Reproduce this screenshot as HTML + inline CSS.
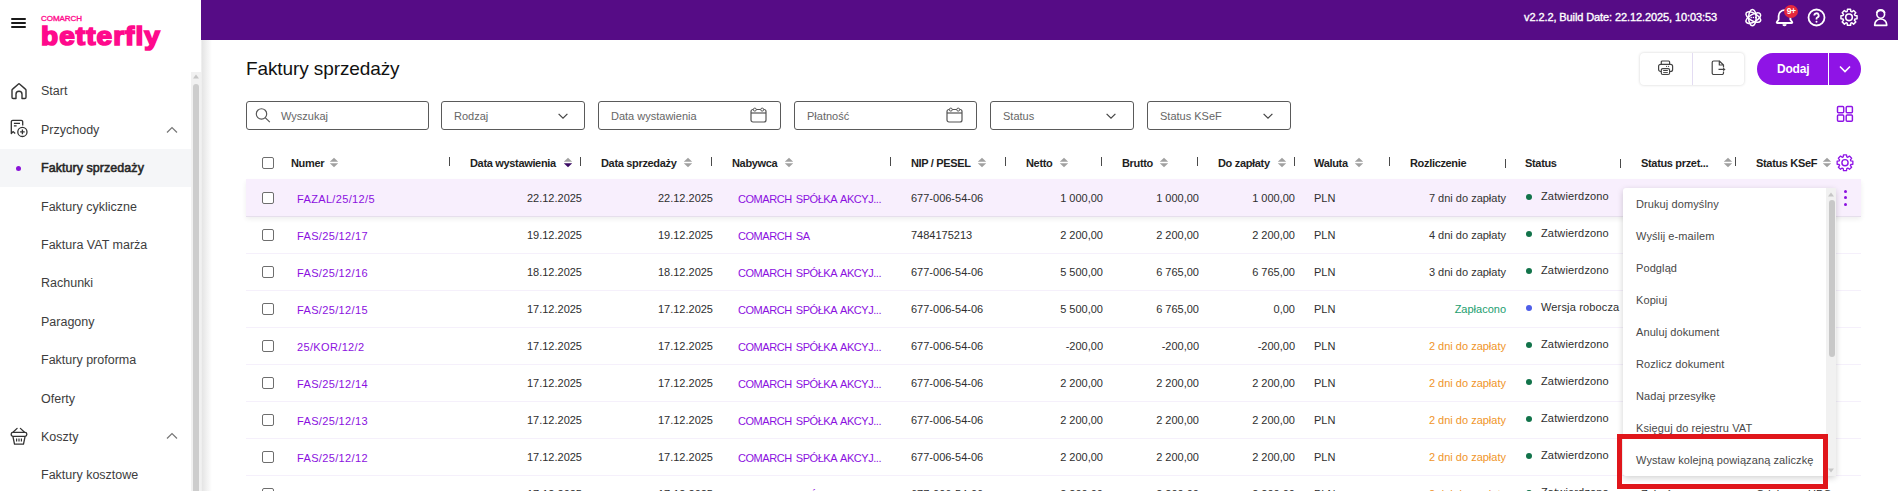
<!DOCTYPE html>
<html><head><meta charset="utf-8"><style>
html,body{margin:0;padding:0}
body{width:1898px;height:491px;overflow:hidden;position:relative;background:#fff;font-family:"Liberation Sans", sans-serif}
.t{position:absolute;white-space:nowrap}
svg{overflow:visible}
</style></head><body>
<div style="position:absolute;left:11px;top:18px;width:15px;height:2px;background:#1a1a1a;border-radius:1px"></div>
<div style="position:absolute;left:11px;top:22px;width:15px;height:2px;background:#1a1a1a;border-radius:1px"></div>
<div style="position:absolute;left:11px;top:26px;width:15px;height:2px;background:#1a1a1a;border-radius:1px"></div>
<div class="t" style="left:41px;top:14px;font-size:8px;line-height:9px;font-weight:400;color:#ff0a8c;letter-spacing:-0.05px;-webkit-text-stroke:0.35px #ff0a8c;">COMARCH</div>
<div class="t" style="left:41px;top:21px;font-size:26px;line-height:30px;font-weight:700;color:#ff0a8c;letter-spacing:1.0px;-webkit-text-stroke:1.7px #ff0a8c;transform:scaleX(1.075);transform-origin:0 0;">betterfly</div>
<div style="position:absolute;left:191px;top:72px;width:10px;height:419px;background:#f1f1f1"></div>
<svg style="position:absolute;left:192px;top:73px;" width="8" height="7" viewBox="0 0 8 7"><path d="M4 1.5 L7 5.5 L1 5.5 Z" fill="#c6c6c6"/></svg>
<div style="position:absolute;left:193px;top:84px;width:6px;height:420px;background:#cdcdcd;border-radius:3px"></div>
<svg style="position:absolute;left:10px;top:82px;" width="18" height="18" viewBox="0 0 18 18"><path d="M3.2 16.5 a1.2 1.2 0 0 1 -1.2 -1.2 V8.3 Q2 7.6 2.6 7.1 L8.2 2.2 Q9 1.5 9.8 2.2 L15.4 7.1 Q16 7.6 16 8.3 V15.3 a1.2 1.2 0 0 1 -1.2 1.2 H12 V12.3 a3 3 0 0 0 -6 0 V16.5 Z" fill="none" stroke="#333" stroke-width="1.4" stroke-linejoin="round"/></svg>
<div class="t" style="left:41px;top:84px;font-size:12.5px;line-height:14px;font-weight:400;color:#3d3d3d;">Start</div>
<svg style="position:absolute;left:10px;top:120px;" width="19" height="18" viewBox="0 0 19 18"><path d="M12.7 5.6 V1.8 a1.5 1.5 0 0 0 -1.5 -1.5 H2.8 a1.5 1.5 0 0 0 -1.5 1.5 V13.5 L3 11.6 L5.2 13.5" fill="none" stroke="#333" stroke-width="1.3" stroke-linejoin="round"/><path d="M3.9 3.4 H10 M3.9 5.8 H6.6" stroke="#333" stroke-width="1.2"/><circle cx="12.4" cy="11.9" r="4.6" fill="none" stroke="#333" stroke-width="1.3"/><path d="M12.4 9.6 V14.2 M10.1 11.9 H14.7" stroke="#333" stroke-width="1.3"/></svg>
<div class="t" style="left:41px;top:123px;font-size:12.5px;line-height:14px;font-weight:400;color:#3d3d3d;">Przychody</div>
<svg style="position:absolute;left:166px;top:125.5px;" width="12" height="8" viewBox="0 0 12 8"><path d="M1 6.5 L6 1.5 L11 6.5" fill="none" stroke="#777" stroke-width="1.2"/></svg>
<div style="position:absolute;left:0px;top:149px;width:191px;height:38px;background:#f5f6f8"></div>
<div style="position:absolute;left:16px;top:166px;width:5px;height:5px;background:#8a14d8;border-radius:50%"></div>
<div class="t" style="left:41px;top:161px;font-size:12.5px;line-height:14px;font-weight:400;color:#262626;letter-spacing:0.05px;-webkit-text-stroke:0.55px #262626;">Faktury sprzedaży</div>
<div class="t" style="left:41px;top:200px;font-size:12.5px;line-height:14px;font-weight:400;color:#3d3d3d;">Faktury cykliczne</div>
<div class="t" style="left:41px;top:238px;font-size:12.5px;line-height:14px;font-weight:400;color:#3d3d3d;">Faktura VAT marża</div>
<div class="t" style="left:41px;top:276px;font-size:12.5px;line-height:14px;font-weight:400;color:#3d3d3d;">Rachunki</div>
<div class="t" style="left:41px;top:315px;font-size:12.5px;line-height:14px;font-weight:400;color:#3d3d3d;">Paragony</div>
<div class="t" style="left:41px;top:353px;font-size:12.5px;line-height:14px;font-weight:400;color:#3d3d3d;">Faktury proforma</div>
<div class="t" style="left:41px;top:392px;font-size:12.5px;line-height:14px;font-weight:400;color:#3d3d3d;">Oferty</div>
<svg style="position:absolute;left:10px;top:428px;" width="18" height="18" viewBox="0 0 18 18"><path d="M7.1 0.4 L3 4.3 M10.4 0.4 L14.5 4.3" stroke="#333" stroke-width="1.3" stroke-linecap="round"/><rect x="1.2" y="4.3" width="15.6" height="4" rx="1.8" fill="none" stroke="#333" stroke-width="1.3"/><path d="M2.9 8.3 L4.5 16.2 H13.5 L15.1 8.3" fill="none" stroke="#333" stroke-width="1.3" stroke-linejoin="round"/><path d="M6.6 10.4 V13.6 M9 10.4 V13.6 M11.4 10.4 V13.6" stroke="#333" stroke-width="1.2"/></svg>
<div class="t" style="left:41px;top:430px;font-size:12.5px;line-height:14px;font-weight:400;color:#3d3d3d;">Koszty</div>
<svg style="position:absolute;left:166px;top:432px;" width="12" height="8" viewBox="0 0 12 8"><path d="M1 6.5 L6 1.5 L11 6.5" fill="none" stroke="#777" stroke-width="1.2"/></svg>
<div class="t" style="left:41px;top:468px;font-size:12.5px;line-height:14px;font-weight:400;color:#3d3d3d;">Faktury kosztowe</div>
<div style="position:absolute;left:201px;top:0px;width:1697px;height:40px;background:#560c86"></div>
<div style="position:absolute;left:201px;top:40px;width:11px;height:451px;background:linear-gradient(to right,#f3f3f3 0px,#e6e6e6 1.5px,#ffffff 11px)"></div>
<div class="t" style="right:181px;top:11px;font-size:11px;line-height:12px;font-weight:400;color:#fff;letter-spacing:-0.1px;-webkit-text-stroke:0.35px #fff;">v2.2.2, Build Date: 22.12.2025, 10:03:53</div>
<svg style="position:absolute;left:1744px;top:9px;" width="18" height="17" viewBox="0 0 18 17"><ellipse cx="8.40" cy="8.60" rx="8.2" ry="3.8" transform="rotate(90 8.40 8.60)" stroke="#fff" fill="none" stroke-width="1.5"/><ellipse cx="9.30" cy="8.08" rx="8.2" ry="3.8" transform="rotate(30 9.30 8.08)" stroke="#fff" fill="none" stroke-width="1.5"/><ellipse cx="9.30" cy="9.12" rx="8.2" ry="3.8" transform="rotate(-30 9.30 9.12)" stroke="#fff" fill="none" stroke-width="1.5"/><circle cx="7.2" cy="8.6" r="0.75" fill="#fff"/><circle cx="9.4" cy="8.6" r="0.75" fill="#fff"/><circle cx="11.6" cy="8.6" r="0.75" fill="#fff"/></svg>
<svg style="position:absolute;left:1775px;top:8px;" width="20" height="20" viewBox="0 0 20 20"><path d="M2.6 15 Q1.2 15 2 13.7 L3.6 11.6 V8 A5.9 5.9 0 0 1 15.4 8 V11.6 L17 13.7 Q17.8 15 16.4 15 Z" stroke="#fff" fill="none" stroke-width="1.8" stroke-linejoin="round"/><path d="M8 16.8 Q9.5 18.6 11 16.8 Z" fill="#fff" stroke="#fff" stroke-width="1.2" stroke-linejoin="round"/></svg>
<div style="position:absolute;left:1784px;top:5px;width:14px;height:13px;background:#e5283c;border-radius:50%"></div>
<div class="t" style="left:1791px;top:6px;font-size:8.5px;line-height:10px;font-weight:700;color:#fff;width:14px;margin-left:-7px;text-align:center;letter-spacing:-0.6px;">9+</div>
<svg style="position:absolute;left:1807px;top:8px;" width="19" height="19" viewBox="0 0 19 19"><circle cx="9.5" cy="9.5" r="8" stroke="#fff" fill="none" stroke-width="1.8"/><path d="M7.3 7.5 a2.2 2.2 0 1 1 3 2 q-0.8 0.4 -0.8 1.3 v0.7" stroke="#fff" fill="none" stroke-width="1.8"/><circle cx="9.5" cy="13.8" r="1" fill="#fff"/></svg>
<svg style="position:absolute;left:1840px;top:8px;" width="18" height="18" viewBox="0 0 18 18"><path d="M7.19 3.37 L7.44 1.25 L10.56 1.25 L10.81 3.37 L11.91 3.83 L13.59 2.50 L15.80 4.71 L14.47 6.39 L14.93 7.49 L17.05 7.74 L17.05 10.86 L14.93 11.11 L14.47 12.21 L15.80 13.89 L13.59 16.10 L11.91 14.77 L10.81 15.23 L10.56 17.35 L7.44 17.35 L7.19 15.23 L6.09 14.77 L4.41 16.10 L2.20 13.89 L3.53 12.21 L3.07 11.11 L0.95 10.86 L0.95 7.74 L3.07 7.49 L3.53 6.39 L2.20 4.71 L4.41 2.50 L6.09 3.83 Z" stroke="#fff" fill="none" stroke-width="1.5" stroke-linejoin="round"/><circle cx="9" cy="9.3" r="3.3" stroke="#fff" fill="none" stroke-width="1.6"/></svg>
<svg style="position:absolute;left:1873px;top:8px;" width="16" height="19" viewBox="0 0 16 19"><circle cx="7.7" cy="6.3" r="3.9" stroke="#fff" fill="none" stroke-width="1.6"/><path d="M3.6 5.2 a4.2 4.2 0 0 1 8.2 0" stroke="#fff" fill="none" stroke-width="1.6"/><path d="M1.7 17.3 V16.8 a6 5.8 0 0 1 12 0 V17.3 Z" stroke="#fff" fill="none" stroke-width="1.7" stroke-linejoin="round"/></svg>
<div class="t" style="left:246px;top:58px;font-size:19px;line-height:21px;font-weight:400;color:#111;letter-spacing:-0.1px;">Faktury sprzedaży</div>
<div style="position:absolute;left:1640px;top:53px;width:104px;height:32px;background:#fff;border-radius:4px;box-shadow:0 0 3px rgba(0,0,0,0.18)"></div>
<div style="position:absolute;left:1692px;top:53px;width:1px;height:32px;background:#e3dcf2"></div>
<svg style="position:absolute;left:1656px;top:59px;" width="20" height="18" viewBox="0 0 20 18"><path d="M5.3 5.3 V3 a1 1 0 0 1 1 -1 H12.6 a1 1 0 0 1 1 1 V5.3" fill="none" stroke="#444" stroke-width="1.2"/><path d="M5.3 12.5 H4.6 a2 2 0 0 1 -2 -2 V7.3 a2 2 0 0 1 2 -2 H14.6 a2 2 0 0 1 2 2 V10.5 a2 2 0 0 1 -2 2 H13.6" fill="none" stroke="#444" stroke-width="1.2"/><rect x="5.3" y="9.6" width="8.3" height="5.9" rx="1.5" fill="none" stroke="#444" stroke-width="1.2"/><path d="M7.2 11.5 H11.8 M7.2 13.6 H11.8" stroke="#444" stroke-width="1"/><circle cx="10.6" cy="7.4" r="0.55" fill="#444"/><circle cx="12.6" cy="7.4" r="0.55" fill="#444"/></svg>
<svg style="position:absolute;left:1710px;top:59px;" width="18" height="18" viewBox="0 0 18 18"><path d="M9.3 2 H3.7 a1.5 1.5 0 0 0 -1.5 1.5 V14 a1.5 1.5 0 0 0 1.5 1.5 H12 a1.5 1.5 0 0 0 1.5 -1.5 V12.5 M13.5 8.5 V6 L9.3 2 V6 H13.5" fill="none" stroke="#444" stroke-width="1.2" stroke-linejoin="round"/><path d="M8.5 10.4 H14.6 M13.2 9.1 L14.7 10.4 L13.2 11.7" fill="none" stroke="#444" stroke-width="1.1"/></svg>
<div style="position:absolute;left:1757px;top:53px;width:104px;height:32px;background:#8f14e6;border-radius:16px"></div>
<div style="position:absolute;left:1828px;top:53px;width:1px;height:32px;background:#fff"></div>
<div class="t" style="left:1777px;top:62px;font-size:12px;line-height:14px;font-weight:700;color:#fff;letter-spacing:-0.2px;">Dodaj</div>
<svg style="position:absolute;left:1839px;top:65px;" width="12" height="9" viewBox="0 0 12 9"><path d="M1 1.5 L6 6.5 L11 1.5" fill="none" stroke="#fff" stroke-width="1.6"/></svg>
<div style="position:absolute;left:246px;top:101px;width:183px;height:29px;border:1px solid #5a5a5a;border-radius:3px;box-sizing:border-box;background:#fff"></div>
<div style="position:absolute;left:441px;top:101px;width:144px;height:29px;border:1px solid #5a5a5a;border-radius:3px;box-sizing:border-box;background:#fff"></div>
<div style="position:absolute;left:598px;top:101px;width:183px;height:29px;border:1px solid #5a5a5a;border-radius:3px;box-sizing:border-box;background:#fff"></div>
<div style="position:absolute;left:794px;top:101px;width:183px;height:29px;border:1px solid #5a5a5a;border-radius:3px;box-sizing:border-box;background:#fff"></div>
<div style="position:absolute;left:990px;top:101px;width:144px;height:29px;border:1px solid #5a5a5a;border-radius:3px;box-sizing:border-box;background:#fff"></div>
<div style="position:absolute;left:1147px;top:101px;width:144px;height:29px;border:1px solid #5a5a5a;border-radius:3px;box-sizing:border-box;background:#fff"></div>
<svg style="position:absolute;left:255px;top:107px;" width="17" height="17" viewBox="0 0 17 17"><circle cx="6.5" cy="6.9" r="5.2" fill="none" stroke="#555" stroke-width="1.15"/><path d="M10.2 10.6 L14.8 15.2" stroke="#555" stroke-width="1.15"/></svg>
<div class="t" style="left:281px;top:110px;font-size:11px;line-height:12px;font-weight:400;color:#666;">Wyszukaj</div>
<div class="t" style="left:454px;top:110px;font-size:11px;line-height:12px;font-weight:400;color:#666;">Rodzaj</div>
<div class="t" style="left:611px;top:110px;font-size:11px;line-height:12px;font-weight:400;color:#666;">Data wystawienia</div>
<div class="t" style="left:807px;top:110px;font-size:11px;line-height:12px;font-weight:400;color:#666;">Płatność</div>
<div class="t" style="left:1003px;top:110px;font-size:11px;line-height:12px;font-weight:400;color:#666;">Status</div>
<div class="t" style="left:1160px;top:110px;font-size:11px;line-height:12px;font-weight:400;color:#666;">Status KSeF</div>
<svg style="position:absolute;left:557px;top:112px;" width="12" height="8" viewBox="0 0 12 8"><path d="M1.6 1.8 L6 6.2 L10.4 1.8" fill="none" stroke="#444" stroke-width="1.2"/></svg>
<svg style="position:absolute;left:1105px;top:112px;" width="12" height="8" viewBox="0 0 12 8"><path d="M1.6 1.8 L6 6.2 L10.4 1.8" fill="none" stroke="#444" stroke-width="1.2"/></svg>
<svg style="position:absolute;left:1262px;top:112px;" width="12" height="8" viewBox="0 0 12 8"><path d="M1.6 1.8 L6 6.2 L10.4 1.8" fill="none" stroke="#444" stroke-width="1.2"/></svg>
<svg style="position:absolute;left:750px;top:107px;" width="17" height="16" viewBox="0 0 17 16"><rect x="1" y="2.5" width="15" height="12.5" rx="2" fill="none" stroke="#555" stroke-width="1.2"/><path d="M1 6 H16" stroke="#555" stroke-width="1.2"/><circle cx="4.8" cy="2.6" r="1.5" fill="#fff" stroke="#555" stroke-width="1"/><circle cx="12.2" cy="2.6" r="1.5" fill="#fff" stroke="#555" stroke-width="1"/></svg>
<svg style="position:absolute;left:946px;top:107px;" width="17" height="16" viewBox="0 0 17 16"><rect x="1" y="2.5" width="15" height="12.5" rx="2" fill="none" stroke="#555" stroke-width="1.2"/><path d="M1 6 H16" stroke="#555" stroke-width="1.2"/><circle cx="4.8" cy="2.6" r="1.5" fill="#fff" stroke="#555" stroke-width="1"/><circle cx="12.2" cy="2.6" r="1.5" fill="#fff" stroke="#555" stroke-width="1"/></svg>
<svg style="position:absolute;left:1836px;top:105px;" width="18" height="18" viewBox="0 0 18 18"><rect x="1.5" y="1.5" width="6.2" height="6.2" rx="1" fill="none" stroke="#8f14e6" stroke-width="1.45"/><rect x="10.2" y="1.5" width="6.2" height="6.2" rx="1" fill="none" stroke="#8f14e6" stroke-width="1.45"/><rect x="1.5" y="10.0" width="6.2" height="6.2" rx="1" fill="none" stroke="#8f14e6" stroke-width="1.45"/><rect x="10.2" y="10.0" width="6.2" height="6.2" rx="1" fill="none" stroke="#8f14e6" stroke-width="1.45"/></svg>
<div style="position:absolute;left:262px;top:157px;width:12px;height:12px;border:1.5px solid #6e6e6e;border-radius:2px;box-sizing:border-box;background:#fff"></div>
<div class="t" style="left:291px;top:157px;font-size:11px;line-height:12px;font-weight:700;color:#1f1f1f;letter-spacing:-0.33px;">Numer</div>
<svg style="position:absolute;left:329px;top:157px;" width="10" height="11" viewBox="0 0 10 11"><path d="M5 0.8 L9.2 4.7 H0.8 Z" fill="#a0a0a0"/><path d="M5 10.2 L9.2 6.3 H0.8 Z" fill="#a0a0a0"/></svg>
<div class="t" style="left:470px;top:157px;font-size:11px;line-height:12px;font-weight:700;color:#1f1f1f;letter-spacing:-0.33px;">Data wystawienia</div>
<svg style="position:absolute;left:563px;top:157px;" width="10" height="11" viewBox="0 0 10 11"><path d="M5 0.8 L9.2 4.7 H0.8 Z" fill="#a0a0a0"/><path d="M5 10.2 L9.2 6.3 H0.8 Z" fill="#3a0a63"/></svg>
<div class="t" style="left:601px;top:157px;font-size:11px;line-height:12px;font-weight:700;color:#1f1f1f;letter-spacing:-0.33px;">Data sprzedaży</div>
<svg style="position:absolute;left:683px;top:157px;" width="10" height="11" viewBox="0 0 10 11"><path d="M5 0.8 L9.2 4.7 H0.8 Z" fill="#a0a0a0"/><path d="M5 10.2 L9.2 6.3 H0.8 Z" fill="#a0a0a0"/></svg>
<div class="t" style="left:732px;top:157px;font-size:11px;line-height:12px;font-weight:700;color:#1f1f1f;letter-spacing:-0.33px;">Nabywca</div>
<svg style="position:absolute;left:784px;top:157px;" width="10" height="11" viewBox="0 0 10 11"><path d="M5 0.8 L9.2 4.7 H0.8 Z" fill="#a0a0a0"/><path d="M5 10.2 L9.2 6.3 H0.8 Z" fill="#a0a0a0"/></svg>
<div class="t" style="left:911px;top:157px;font-size:11px;line-height:12px;font-weight:700;color:#1f1f1f;letter-spacing:-0.33px;">NIP / PESEL</div>
<svg style="position:absolute;left:977px;top:157px;" width="10" height="11" viewBox="0 0 10 11"><path d="M5 0.8 L9.2 4.7 H0.8 Z" fill="#a0a0a0"/><path d="M5 10.2 L9.2 6.3 H0.8 Z" fill="#a0a0a0"/></svg>
<div class="t" style="left:1026px;top:157px;font-size:11px;line-height:12px;font-weight:700;color:#1f1f1f;letter-spacing:-0.33px;">Netto</div>
<svg style="position:absolute;left:1059px;top:157px;" width="10" height="11" viewBox="0 0 10 11"><path d="M5 0.8 L9.2 4.7 H0.8 Z" fill="#a0a0a0"/><path d="M5 10.2 L9.2 6.3 H0.8 Z" fill="#a0a0a0"/></svg>
<div class="t" style="left:1122px;top:157px;font-size:11px;line-height:12px;font-weight:700;color:#1f1f1f;letter-spacing:-0.33px;">Brutto</div>
<svg style="position:absolute;left:1159px;top:157px;" width="10" height="11" viewBox="0 0 10 11"><path d="M5 0.8 L9.2 4.7 H0.8 Z" fill="#a0a0a0"/><path d="M5 10.2 L9.2 6.3 H0.8 Z" fill="#a0a0a0"/></svg>
<div class="t" style="left:1218px;top:157px;font-size:11px;line-height:12px;font-weight:700;color:#1f1f1f;letter-spacing:-0.33px;">Do zapłaty</div>
<svg style="position:absolute;left:1277px;top:157px;" width="10" height="11" viewBox="0 0 10 11"><path d="M5 0.8 L9.2 4.7 H0.8 Z" fill="#a0a0a0"/><path d="M5 10.2 L9.2 6.3 H0.8 Z" fill="#a0a0a0"/></svg>
<div class="t" style="left:1314px;top:157px;font-size:11px;line-height:12px;font-weight:700;color:#1f1f1f;letter-spacing:-0.33px;">Waluta</div>
<svg style="position:absolute;left:1354px;top:157px;" width="10" height="11" viewBox="0 0 10 11"><path d="M5 0.8 L9.2 4.7 H0.8 Z" fill="#a0a0a0"/><path d="M5 10.2 L9.2 6.3 H0.8 Z" fill="#a0a0a0"/></svg>
<div class="t" style="left:1410px;top:157px;font-size:11px;line-height:12px;font-weight:700;color:#1f1f1f;letter-spacing:-0.33px;">Rozliczenie</div>
<div class="t" style="left:1525px;top:157px;font-size:11px;line-height:12px;font-weight:700;color:#1f1f1f;letter-spacing:-0.33px;">Status</div>
<div class="t" style="left:1641px;top:157px;font-size:11px;line-height:12px;font-weight:700;color:#1f1f1f;letter-spacing:-0.33px;">Status przet...</div>
<svg style="position:absolute;left:1723px;top:157px;" width="10" height="11" viewBox="0 0 10 11"><path d="M5 0.8 L9.2 4.7 H0.8 Z" fill="#a0a0a0"/><path d="M5 10.2 L9.2 6.3 H0.8 Z" fill="#a0a0a0"/></svg>
<div class="t" style="left:1756px;top:157px;font-size:11px;line-height:12px;font-weight:700;color:#1f1f1f;letter-spacing:-0.33px;">Status KSeF</div>
<svg style="position:absolute;left:1822px;top:157px;" width="10" height="11" viewBox="0 0 10 11"><path d="M5 0.8 L9.2 4.7 H0.8 Z" fill="#a0a0a0"/><path d="M5 10.2 L9.2 6.3 H0.8 Z" fill="#a0a0a0"/></svg>
<div style="position:absolute;left:449px;top:157px;width:1px;height:9px;background:#4a4a4a"></div>
<div style="position:absolute;left:580px;top:157px;width:1px;height:9px;background:#4a4a4a"></div>
<div style="position:absolute;left:711px;top:157px;width:1px;height:9px;background:#4a4a4a"></div>
<div style="position:absolute;left:890px;top:157px;width:1px;height:9px;background:#4a4a4a"></div>
<div style="position:absolute;left:1005px;top:157px;width:1px;height:9px;background:#4a4a4a"></div>
<div style="position:absolute;left:1101px;top:157px;width:1px;height:9px;background:#4a4a4a"></div>
<div style="position:absolute;left:1197px;top:157px;width:1px;height:9px;background:#4a4a4a"></div>
<div style="position:absolute;left:1294px;top:157px;width:1px;height:9px;background:#4a4a4a"></div>
<div style="position:absolute;left:1389px;top:157px;width:1px;height:9px;background:#4a4a4a"></div>
<div style="position:absolute;left:1735px;top:157px;width:1px;height:9px;background:#4a4a4a"></div>
<div style="position:absolute;left:1505px;top:159px;width:1px;height:9px;background:#4a4a4a"></div>
<div style="position:absolute;left:1620px;top:159px;width:1px;height:9px;background:#4a4a4a"></div>
<svg style="position:absolute;left:1836px;top:154px;" width="18" height="18" viewBox="0 0 18 18"><path d="M7.22 2.87 L7.47 0.85 L10.53 0.85 L10.78 2.87 L11.86 3.31 L13.47 2.07 L15.63 4.23 L14.39 5.84 L14.83 6.92 L16.85 7.17 L16.85 10.23 L14.83 10.48 L14.39 11.56 L15.63 13.17 L13.47 15.33 L11.86 14.09 L10.78 14.53 L10.53 16.55 L7.47 16.55 L7.22 14.53 L6.14 14.09 L4.53 15.33 L2.37 13.17 L3.61 11.56 L3.17 10.48 L1.15 10.23 L1.15 7.17 L3.17 6.92 L3.61 5.84 L2.37 4.23 L4.53 2.07 L6.14 3.31 Z" fill="none" stroke="#8f14e6" stroke-width="1.3" stroke-linejoin="round"/><circle cx="9" cy="8.7" r="3.1" fill="none" stroke="#8f14e6" stroke-width="1.4"/></svg>
<div style="position:absolute;left:246px;top:179px;width:1615px;height:37px;background:#f8effd;box-shadow:0 3px 5px rgba(0,0,0,0.07)"></div>
<div style="position:absolute;left:246px;top:216px;width:1615px;height:1px;background:#e6dfec"></div>
<div style="position:absolute;left:262px;top:192px;width:12px;height:12px;border:1.5px solid #6e6e6e;border-radius:2px;box-sizing:border-box;background:#fff"></div>
<div class="t" style="left:297px;top:193px;font-size:11px;line-height:12px;font-weight:400;color:#8b10e0;letter-spacing:0.35px;">FAZAL/25/12/5</div>
<div class="t" style="right:1316px;top:192px;font-size:11px;line-height:12px;font-weight:400;color:#2e2e2e;">22.12.2025</div>
<div class="t" style="right:1185px;top:192px;font-size:11px;line-height:12px;font-weight:400;color:#2e2e2e;">22.12.2025</div>
<div class="t" style="left:738px;top:193px;font-size:11px;line-height:12px;font-weight:400;color:#8b10e0;letter-spacing:-0.45px;word-spacing:1.5px;">COMARCH SPÓŁKA AKCYJ...</div>
<div class="t" style="left:911px;top:192px;font-size:11px;line-height:12px;font-weight:400;color:#2e2e2e;">677-006-54-06</div>
<div class="t" style="right:795px;top:192px;font-size:11px;line-height:12px;font-weight:400;color:#2e2e2e;">1 000,00</div>
<div class="t" style="right:699px;top:192px;font-size:11px;line-height:12px;font-weight:400;color:#2e2e2e;">1 000,00</div>
<div class="t" style="right:603px;top:192px;font-size:11px;line-height:12px;font-weight:400;color:#2e2e2e;">1 000,00</div>
<div class="t" style="left:1314px;top:192px;font-size:11px;line-height:12px;font-weight:400;color:#2e2e2e;">PLN</div>
<div class="t" style="right:392px;top:192px;font-size:11px;line-height:12px;font-weight:400;color:#333;">7 dni do zapłaty</div>
<div style="position:absolute;left:1526px;top:194px;width:6px;height:6px;background:#12734a;border-radius:50%"></div>
<div class="t" style="left:1541px;top:190px;font-size:11px;line-height:12px;font-weight:400;color:#2e2e2e;letter-spacing:0.15px;">Zatwierdzono</div>
<div style="position:absolute;left:246px;top:253px;width:1615px;height:1px;background:#f5f0fb"></div>
<div style="position:absolute;left:262px;top:229px;width:12px;height:12px;border:1.5px solid #6e6e6e;border-radius:2px;box-sizing:border-box;background:#fff"></div>
<div class="t" style="left:297px;top:230px;font-size:11px;line-height:12px;font-weight:400;color:#8b10e0;letter-spacing:0.35px;">FAS/25/12/17</div>
<div class="t" style="right:1316px;top:229px;font-size:11px;line-height:12px;font-weight:400;color:#2e2e2e;">19.12.2025</div>
<div class="t" style="right:1185px;top:229px;font-size:11px;line-height:12px;font-weight:400;color:#2e2e2e;">19.12.2025</div>
<div class="t" style="left:738px;top:230px;font-size:11px;line-height:12px;font-weight:400;color:#8b10e0;letter-spacing:-0.45px;word-spacing:1.5px;">COMARCH SA</div>
<div class="t" style="left:911px;top:229px;font-size:11px;line-height:12px;font-weight:400;color:#2e2e2e;">7484175213</div>
<div class="t" style="right:795px;top:229px;font-size:11px;line-height:12px;font-weight:400;color:#2e2e2e;">2 200,00</div>
<div class="t" style="right:699px;top:229px;font-size:11px;line-height:12px;font-weight:400;color:#2e2e2e;">2 200,00</div>
<div class="t" style="right:603px;top:229px;font-size:11px;line-height:12px;font-weight:400;color:#2e2e2e;">2 200,00</div>
<div class="t" style="left:1314px;top:229px;font-size:11px;line-height:12px;font-weight:400;color:#2e2e2e;">PLN</div>
<div class="t" style="right:392px;top:229px;font-size:11px;line-height:12px;font-weight:400;color:#333;">4 dni do zapłaty</div>
<div style="position:absolute;left:1526px;top:231px;width:6px;height:6px;background:#12734a;border-radius:50%"></div>
<div class="t" style="left:1541px;top:227px;font-size:11px;line-height:12px;font-weight:400;color:#2e2e2e;letter-spacing:0.15px;">Zatwierdzono</div>
<div style="position:absolute;left:246px;top:290px;width:1615px;height:1px;background:#f5f0fb"></div>
<div style="position:absolute;left:262px;top:266px;width:12px;height:12px;border:1.5px solid #6e6e6e;border-radius:2px;box-sizing:border-box;background:#fff"></div>
<div class="t" style="left:297px;top:267px;font-size:11px;line-height:12px;font-weight:400;color:#8b10e0;letter-spacing:0.35px;">FAS/25/12/16</div>
<div class="t" style="right:1316px;top:266px;font-size:11px;line-height:12px;font-weight:400;color:#2e2e2e;">18.12.2025</div>
<div class="t" style="right:1185px;top:266px;font-size:11px;line-height:12px;font-weight:400;color:#2e2e2e;">18.12.2025</div>
<div class="t" style="left:738px;top:267px;font-size:11px;line-height:12px;font-weight:400;color:#8b10e0;letter-spacing:-0.45px;word-spacing:1.5px;">COMARCH SPÓŁKA AKCYJ...</div>
<div class="t" style="left:911px;top:266px;font-size:11px;line-height:12px;font-weight:400;color:#2e2e2e;">677-006-54-06</div>
<div class="t" style="right:795px;top:266px;font-size:11px;line-height:12px;font-weight:400;color:#2e2e2e;">5 500,00</div>
<div class="t" style="right:699px;top:266px;font-size:11px;line-height:12px;font-weight:400;color:#2e2e2e;">6 765,00</div>
<div class="t" style="right:603px;top:266px;font-size:11px;line-height:12px;font-weight:400;color:#2e2e2e;">6 765,00</div>
<div class="t" style="left:1314px;top:266px;font-size:11px;line-height:12px;font-weight:400;color:#2e2e2e;">PLN</div>
<div class="t" style="right:392px;top:266px;font-size:11px;line-height:12px;font-weight:400;color:#333;">3 dni do zapłaty</div>
<div style="position:absolute;left:1526px;top:268px;width:6px;height:6px;background:#12734a;border-radius:50%"></div>
<div class="t" style="left:1541px;top:264px;font-size:11px;line-height:12px;font-weight:400;color:#2e2e2e;letter-spacing:0.15px;">Zatwierdzono</div>
<div style="position:absolute;left:246px;top:327px;width:1615px;height:1px;background:#f5f0fb"></div>
<div style="position:absolute;left:262px;top:303px;width:12px;height:12px;border:1.5px solid #6e6e6e;border-radius:2px;box-sizing:border-box;background:#fff"></div>
<div class="t" style="left:297px;top:304px;font-size:11px;line-height:12px;font-weight:400;color:#8b10e0;letter-spacing:0.35px;">FAS/25/12/15</div>
<div class="t" style="right:1316px;top:303px;font-size:11px;line-height:12px;font-weight:400;color:#2e2e2e;">17.12.2025</div>
<div class="t" style="right:1185px;top:303px;font-size:11px;line-height:12px;font-weight:400;color:#2e2e2e;">17.12.2025</div>
<div class="t" style="left:738px;top:304px;font-size:11px;line-height:12px;font-weight:400;color:#8b10e0;letter-spacing:-0.45px;word-spacing:1.5px;">COMARCH SPÓŁKA AKCYJ...</div>
<div class="t" style="left:911px;top:303px;font-size:11px;line-height:12px;font-weight:400;color:#2e2e2e;">677-006-54-06</div>
<div class="t" style="right:795px;top:303px;font-size:11px;line-height:12px;font-weight:400;color:#2e2e2e;">5 500,00</div>
<div class="t" style="right:699px;top:303px;font-size:11px;line-height:12px;font-weight:400;color:#2e2e2e;">6 765,00</div>
<div class="t" style="right:603px;top:303px;font-size:11px;line-height:12px;font-weight:400;color:#2e2e2e;">0,00</div>
<div class="t" style="left:1314px;top:303px;font-size:11px;line-height:12px;font-weight:400;color:#2e2e2e;">PLN</div>
<div class="t" style="right:392px;top:303px;font-size:11px;line-height:12px;font-weight:400;color:#1c9e70;">Zapłacono</div>
<div style="position:absolute;left:1526px;top:305px;width:6px;height:6px;background:#4e5ee8;border-radius:50%"></div>
<div class="t" style="left:1541px;top:301px;font-size:11px;line-height:12px;font-weight:400;color:#2e2e2e;letter-spacing:0.15px;">Wersja robocza</div>
<div style="position:absolute;left:246px;top:364px;width:1615px;height:1px;background:#f5f0fb"></div>
<div style="position:absolute;left:262px;top:340px;width:12px;height:12px;border:1.5px solid #6e6e6e;border-radius:2px;box-sizing:border-box;background:#fff"></div>
<div class="t" style="left:297px;top:341px;font-size:11px;line-height:12px;font-weight:400;color:#8b10e0;letter-spacing:0.35px;">25/KOR/12/2</div>
<div class="t" style="right:1316px;top:340px;font-size:11px;line-height:12px;font-weight:400;color:#2e2e2e;">17.12.2025</div>
<div class="t" style="right:1185px;top:340px;font-size:11px;line-height:12px;font-weight:400;color:#2e2e2e;">17.12.2025</div>
<div class="t" style="left:738px;top:341px;font-size:11px;line-height:12px;font-weight:400;color:#8b10e0;letter-spacing:-0.45px;word-spacing:1.5px;">COMARCH SPÓŁKA AKCYJ...</div>
<div class="t" style="left:911px;top:340px;font-size:11px;line-height:12px;font-weight:400;color:#2e2e2e;">677-006-54-06</div>
<div class="t" style="right:795px;top:340px;font-size:11px;line-height:12px;font-weight:400;color:#2e2e2e;">-200,00</div>
<div class="t" style="right:699px;top:340px;font-size:11px;line-height:12px;font-weight:400;color:#2e2e2e;">-200,00</div>
<div class="t" style="right:603px;top:340px;font-size:11px;line-height:12px;font-weight:400;color:#2e2e2e;">-200,00</div>
<div class="t" style="left:1314px;top:340px;font-size:11px;line-height:12px;font-weight:400;color:#2e2e2e;">PLN</div>
<div class="t" style="right:392px;top:340px;font-size:11px;line-height:12px;font-weight:400;color:#f0952a;">2 dni do zapłaty</div>
<div style="position:absolute;left:1526px;top:342px;width:6px;height:6px;background:#12734a;border-radius:50%"></div>
<div class="t" style="left:1541px;top:338px;font-size:11px;line-height:12px;font-weight:400;color:#2e2e2e;letter-spacing:0.15px;">Zatwierdzono</div>
<div style="position:absolute;left:246px;top:401px;width:1615px;height:1px;background:#f5f0fb"></div>
<div style="position:absolute;left:262px;top:377px;width:12px;height:12px;border:1.5px solid #6e6e6e;border-radius:2px;box-sizing:border-box;background:#fff"></div>
<div class="t" style="left:297px;top:378px;font-size:11px;line-height:12px;font-weight:400;color:#8b10e0;letter-spacing:0.35px;">FAS/25/12/14</div>
<div class="t" style="right:1316px;top:377px;font-size:11px;line-height:12px;font-weight:400;color:#2e2e2e;">17.12.2025</div>
<div class="t" style="right:1185px;top:377px;font-size:11px;line-height:12px;font-weight:400;color:#2e2e2e;">17.12.2025</div>
<div class="t" style="left:738px;top:378px;font-size:11px;line-height:12px;font-weight:400;color:#8b10e0;letter-spacing:-0.45px;word-spacing:1.5px;">COMARCH SPÓŁKA AKCYJ...</div>
<div class="t" style="left:911px;top:377px;font-size:11px;line-height:12px;font-weight:400;color:#2e2e2e;">677-006-54-06</div>
<div class="t" style="right:795px;top:377px;font-size:11px;line-height:12px;font-weight:400;color:#2e2e2e;">2 200,00</div>
<div class="t" style="right:699px;top:377px;font-size:11px;line-height:12px;font-weight:400;color:#2e2e2e;">2 200,00</div>
<div class="t" style="right:603px;top:377px;font-size:11px;line-height:12px;font-weight:400;color:#2e2e2e;">2 200,00</div>
<div class="t" style="left:1314px;top:377px;font-size:11px;line-height:12px;font-weight:400;color:#2e2e2e;">PLN</div>
<div class="t" style="right:392px;top:377px;font-size:11px;line-height:12px;font-weight:400;color:#f0952a;">2 dni do zapłaty</div>
<div style="position:absolute;left:1526px;top:379px;width:6px;height:6px;background:#12734a;border-radius:50%"></div>
<div class="t" style="left:1541px;top:375px;font-size:11px;line-height:12px;font-weight:400;color:#2e2e2e;letter-spacing:0.15px;">Zatwierdzono</div>
<div style="position:absolute;left:246px;top:438px;width:1615px;height:1px;background:#f5f0fb"></div>
<div style="position:absolute;left:262px;top:414px;width:12px;height:12px;border:1.5px solid #6e6e6e;border-radius:2px;box-sizing:border-box;background:#fff"></div>
<div class="t" style="left:297px;top:415px;font-size:11px;line-height:12px;font-weight:400;color:#8b10e0;letter-spacing:0.35px;">FAS/25/12/13</div>
<div class="t" style="right:1316px;top:414px;font-size:11px;line-height:12px;font-weight:400;color:#2e2e2e;">17.12.2025</div>
<div class="t" style="right:1185px;top:414px;font-size:11px;line-height:12px;font-weight:400;color:#2e2e2e;">17.12.2025</div>
<div class="t" style="left:738px;top:415px;font-size:11px;line-height:12px;font-weight:400;color:#8b10e0;letter-spacing:-0.45px;word-spacing:1.5px;">COMARCH SPÓŁKA AKCYJ...</div>
<div class="t" style="left:911px;top:414px;font-size:11px;line-height:12px;font-weight:400;color:#2e2e2e;">677-006-54-06</div>
<div class="t" style="right:795px;top:414px;font-size:11px;line-height:12px;font-weight:400;color:#2e2e2e;">2 200,00</div>
<div class="t" style="right:699px;top:414px;font-size:11px;line-height:12px;font-weight:400;color:#2e2e2e;">2 200,00</div>
<div class="t" style="right:603px;top:414px;font-size:11px;line-height:12px;font-weight:400;color:#2e2e2e;">2 200,00</div>
<div class="t" style="left:1314px;top:414px;font-size:11px;line-height:12px;font-weight:400;color:#2e2e2e;">PLN</div>
<div class="t" style="right:392px;top:414px;font-size:11px;line-height:12px;font-weight:400;color:#f0952a;">2 dni do zapłaty</div>
<div style="position:absolute;left:1526px;top:416px;width:6px;height:6px;background:#12734a;border-radius:50%"></div>
<div class="t" style="left:1541px;top:412px;font-size:11px;line-height:12px;font-weight:400;color:#2e2e2e;letter-spacing:0.15px;">Zatwierdzono</div>
<div style="position:absolute;left:246px;top:475px;width:1615px;height:1px;background:#f5f0fb"></div>
<div style="position:absolute;left:262px;top:451px;width:12px;height:12px;border:1.5px solid #6e6e6e;border-radius:2px;box-sizing:border-box;background:#fff"></div>
<div class="t" style="left:297px;top:452px;font-size:11px;line-height:12px;font-weight:400;color:#8b10e0;letter-spacing:0.35px;">FAS/25/12/12</div>
<div class="t" style="right:1316px;top:451px;font-size:11px;line-height:12px;font-weight:400;color:#2e2e2e;">17.12.2025</div>
<div class="t" style="right:1185px;top:451px;font-size:11px;line-height:12px;font-weight:400;color:#2e2e2e;">17.12.2025</div>
<div class="t" style="left:738px;top:452px;font-size:11px;line-height:12px;font-weight:400;color:#8b10e0;letter-spacing:-0.45px;word-spacing:1.5px;">COMARCH SPÓŁKA AKCYJ...</div>
<div class="t" style="left:911px;top:451px;font-size:11px;line-height:12px;font-weight:400;color:#2e2e2e;">677-006-54-06</div>
<div class="t" style="right:795px;top:451px;font-size:11px;line-height:12px;font-weight:400;color:#2e2e2e;">2 200,00</div>
<div class="t" style="right:699px;top:451px;font-size:11px;line-height:12px;font-weight:400;color:#2e2e2e;">2 200,00</div>
<div class="t" style="right:603px;top:451px;font-size:11px;line-height:12px;font-weight:400;color:#2e2e2e;">2 200,00</div>
<div class="t" style="left:1314px;top:451px;font-size:11px;line-height:12px;font-weight:400;color:#2e2e2e;">PLN</div>
<div class="t" style="right:392px;top:451px;font-size:11px;line-height:12px;font-weight:400;color:#f0952a;">2 dni do zapłaty</div>
<div style="position:absolute;left:1526px;top:453px;width:6px;height:6px;background:#12734a;border-radius:50%"></div>
<div class="t" style="left:1541px;top:449px;font-size:11px;line-height:12px;font-weight:400;color:#2e2e2e;letter-spacing:0.15px;">Zatwierdzono</div>
<div style="position:absolute;left:246px;top:512px;width:1615px;height:1px;background:#f5f0fb"></div>
<div style="position:absolute;left:262px;top:488px;width:12px;height:12px;border:1.5px solid #6e6e6e;border-radius:2px;box-sizing:border-box;background:#fff"></div>
<div class="t" style="left:297px;top:489px;font-size:11px;line-height:12px;font-weight:400;color:#8b10e0;letter-spacing:0.35px;">FAS/25/12/11</div>
<div class="t" style="right:1316px;top:488px;font-size:11px;line-height:12px;font-weight:400;color:#2e2e2e;">17.12.2025</div>
<div class="t" style="right:1185px;top:488px;font-size:11px;line-height:12px;font-weight:400;color:#2e2e2e;">17.12.2025</div>
<div class="t" style="left:738px;top:489px;font-size:11px;line-height:12px;font-weight:400;color:#8b10e0;letter-spacing:-0.45px;word-spacing:1.5px;">COMARCH SPÓŁKA AKCYJ...</div>
<div class="t" style="left:911px;top:488px;font-size:11px;line-height:12px;font-weight:400;color:#2e2e2e;">677-006-54-06</div>
<div class="t" style="right:795px;top:488px;font-size:11px;line-height:12px;font-weight:400;color:#2e2e2e;">2 200,00</div>
<div class="t" style="right:699px;top:488px;font-size:11px;line-height:12px;font-weight:400;color:#2e2e2e;">2 200,00</div>
<div class="t" style="right:603px;top:488px;font-size:11px;line-height:12px;font-weight:400;color:#2e2e2e;">2 200,00</div>
<div class="t" style="left:1314px;top:488px;font-size:11px;line-height:12px;font-weight:400;color:#2e2e2e;">PLN</div>
<div class="t" style="right:392px;top:488px;font-size:11px;line-height:12px;font-weight:400;color:#f0952a;">2 dni do zapłaty</div>
<div style="position:absolute;left:1526px;top:490px;width:6px;height:6px;background:#12734a;border-radius:50%"></div>
<div class="t" style="left:1541px;top:486px;font-size:11px;line-height:12px;font-weight:400;color:#2e2e2e;letter-spacing:0.15px;">Zatwierdzono</div>
<div class="t" style="left:1641px;top:488px;font-size:11px;line-height:12px;font-weight:400;color:#2e2e2e;">Zakończono</div>
<div class="t" style="left:1756px;top:488px;font-size:11px;line-height:12px;font-weight:400;color:#2e2e2e;">Odebrano UPO</div>
<div style="position:absolute;left:1844px;top:189.5px;width:3px;height:3px;border-radius:50%;background:#8b10e0"></div>
<div style="position:absolute;left:1844px;top:196.0px;width:3px;height:3px;border-radius:50%;background:#8b10e0"></div>
<div style="position:absolute;left:1844px;top:202.5px;width:3px;height:3px;border-radius:50%;background:#8b10e0"></div>
<div style="position:absolute;left:1623px;top:188px;width:213px;height:288px;background:#fff;border-radius:3px;box-shadow:0 2px 6px rgba(0,0,0,0.18)"></div>
<div style="position:absolute;left:1826px;top:188px;width:10px;height:288px;background:#f1f1f1"></div>
<svg style="position:absolute;left:1827px;top:191px;" width="8" height="7" viewBox="0 0 8 7"><path d="M4 1.5 L7 5.5 L1 5.5 Z" fill="#c6c6c6"/></svg>
<svg style="position:absolute;left:1827px;top:467px;" width="8" height="7" viewBox="0 0 8 7"><path d="M4 5.5 L7 1.5 L1 1.5 Z" fill="#c6c6c6"/></svg>
<div style="position:absolute;left:1828.5px;top:200px;width:6px;height:157px;background:#c8c8c8;border-radius:3px"></div>
<div class="t" style="left:1636px;top:198px;font-size:11px;line-height:12px;font-weight:400;color:#484848;letter-spacing:0.1px;">Drukuj domyślny</div>
<div class="t" style="left:1636px;top:230px;font-size:11px;line-height:12px;font-weight:400;color:#484848;letter-spacing:0.1px;">Wyślij e-mailem</div>
<div class="t" style="left:1636px;top:262px;font-size:11px;line-height:12px;font-weight:400;color:#484848;letter-spacing:0.1px;">Podgląd</div>
<div class="t" style="left:1636px;top:294px;font-size:11px;line-height:12px;font-weight:400;color:#484848;letter-spacing:0.1px;">Kopiuj</div>
<div class="t" style="left:1636px;top:326px;font-size:11px;line-height:12px;font-weight:400;color:#484848;letter-spacing:0.1px;">Anuluj dokument</div>
<div class="t" style="left:1636px;top:358px;font-size:11px;line-height:12px;font-weight:400;color:#484848;letter-spacing:0.1px;">Rozlicz dokument</div>
<div class="t" style="left:1636px;top:390px;font-size:11px;line-height:12px;font-weight:400;color:#484848;letter-spacing:0.1px;">Nadaj przesyłkę</div>
<div class="t" style="left:1636px;top:422px;font-size:11px;line-height:12px;font-weight:400;color:#484848;letter-spacing:0.1px;">Księguj do rejestru VAT</div>
<div class="t" style="left:1636px;top:454px;font-size:11px;line-height:12px;font-weight:400;color:#484848;letter-spacing:0.1px;">Wystaw kolejną powiązaną zaliczkę</div>
<div style="position:absolute;left:1617px;top:434px;width:211px;height:55px;border:5px solid #e0161b;box-sizing:border-box"></div>
</body></html>
